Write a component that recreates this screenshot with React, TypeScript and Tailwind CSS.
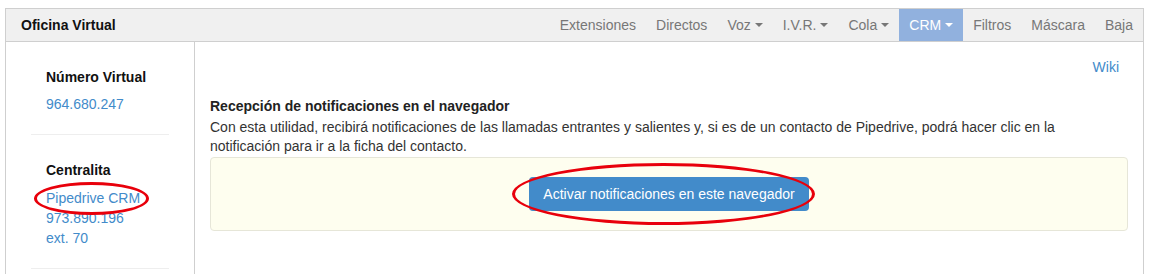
import React from "react";

const Caret = ({ white }: { white?: boolean }) => (
  <span
    className={`ml-[4px] inline-block h-0 w-0 border-x-[4px] border-t-[4px] border-x-transparent align-middle ${
      white ? "border-t-white" : "border-t-[#777]"
    }`}
  />
);

const navItems: { label: string; caret?: boolean; active?: boolean }[] = [
  { label: "Extensiones" },
  { label: "Directos" },
  { label: "Voz", caret: true },
  { label: "I.V.R.", caret: true },
  { label: "Cola", caret: true },
  { label: "CRM", caret: true, active: true },
  { label: "Filtros" },
  { label: "Máscara" },
  { label: "Baja" },
];

export default function App() {
  return (
    <div
      className="h-[274px] w-[1150px] overflow-hidden bg-white pl-[5px] pr-[6px] pt-[8px] text-[14px] leading-[20px] text-[#333]"
      style={{ fontFamily: '"Liberation Sans", Arial, sans-serif' }}
    >
      <div className="border border-[#cfcfcf] h-[300px] flex flex-col">
        {/* header */}
        <div className="flex h-[33px] items-stretch border-b border-[#cfcfcf] bg-[#f0f0f0]">
          <div className="flex items-center pl-[15px] font-bold text-[#111]">Oficina Virtual</div>
          <div className="ml-auto flex items-stretch">
            {navItems.map((n) => (
              <div
                key={n.label}
                className={`flex items-center px-[10px] ${
                  n.active ? "bg-[#91b1de] text-white" : "text-[#777]"
                }`}
              >
                {n.label}
                {n.caret && <Caret white={n.active} />}
              </div>
            ))}
          </div>
        </div>
        {/* body */}
        <div className="flex flex-1">
          <div className="w-[189px] shrink-0 border-r border-[#cfcfcf] px-[25px]">
            <div className="border-b border-[#eee] px-[15px] pb-[20px] pt-[25px]">
              <div className="mb-[7px] font-bold text-[#111]">Número Virtual</div>
              <div className="text-[#428bca]">964.680.247</div>
            </div>
            <div className="border-b border-[#eee] px-[15px] pb-[20px] pt-[25px]">
              <div className="mb-[8px] font-bold text-[#111]">Centralita</div>
              <div className="text-[#428bca]">
                <span className="relative">
                  Pipedrive CRM
                  <span className="absolute left-[-12px] top-[-8px] h-[33px] w-[115px] rounded-[50%] border-[3px] border-[#e8000b]" />
                </span>
              </div>
              <div className="text-[#428bca]">973.890.196</div>
              <div className="text-[#428bca]">ext. 70</div>
            </div>
          </div>
          <div className="flex-1 pl-[15px] pr-[15px] pt-[15px]">
            <div className="flex justify-end pr-[9px] text-[#428bca]">Wiki</div>
            <div className="mt-[19px] font-bold text-[#222]">Recepción de notificaciones en el navegador</div>
            <p className="mt-[2px] leading-[19px]">
              Con esta utilidad, recibirá notificaciones de las llamadas entrantes y salientes y, si es de un contacto de Pipedrive, podrá hacer clic en la
              <br />
              notificación para ir a la ficha del contacto.
            </p>
            <div className="mt-[1px] flex h-[74px] items-center justify-center rounded-[4px] border border-[#e6e6d8] bg-[#fefeef] pb-[1px]">
              <div className="relative">
                <button className="h-[34px] rounded-[4px] bg-[#428bca] px-[14px] text-[14px] text-white">
                  Activar notificaciones en este navegador
                </button>
                <span className="pointer-events-none absolute left-[-17px] top-[-14px] h-[62px] w-[303px] rounded-[50%] border-[3px] border-[#e8000b]" />
              </div>
            </div>
          </div>
        </div>
      </div>
    </div>
  );
}
